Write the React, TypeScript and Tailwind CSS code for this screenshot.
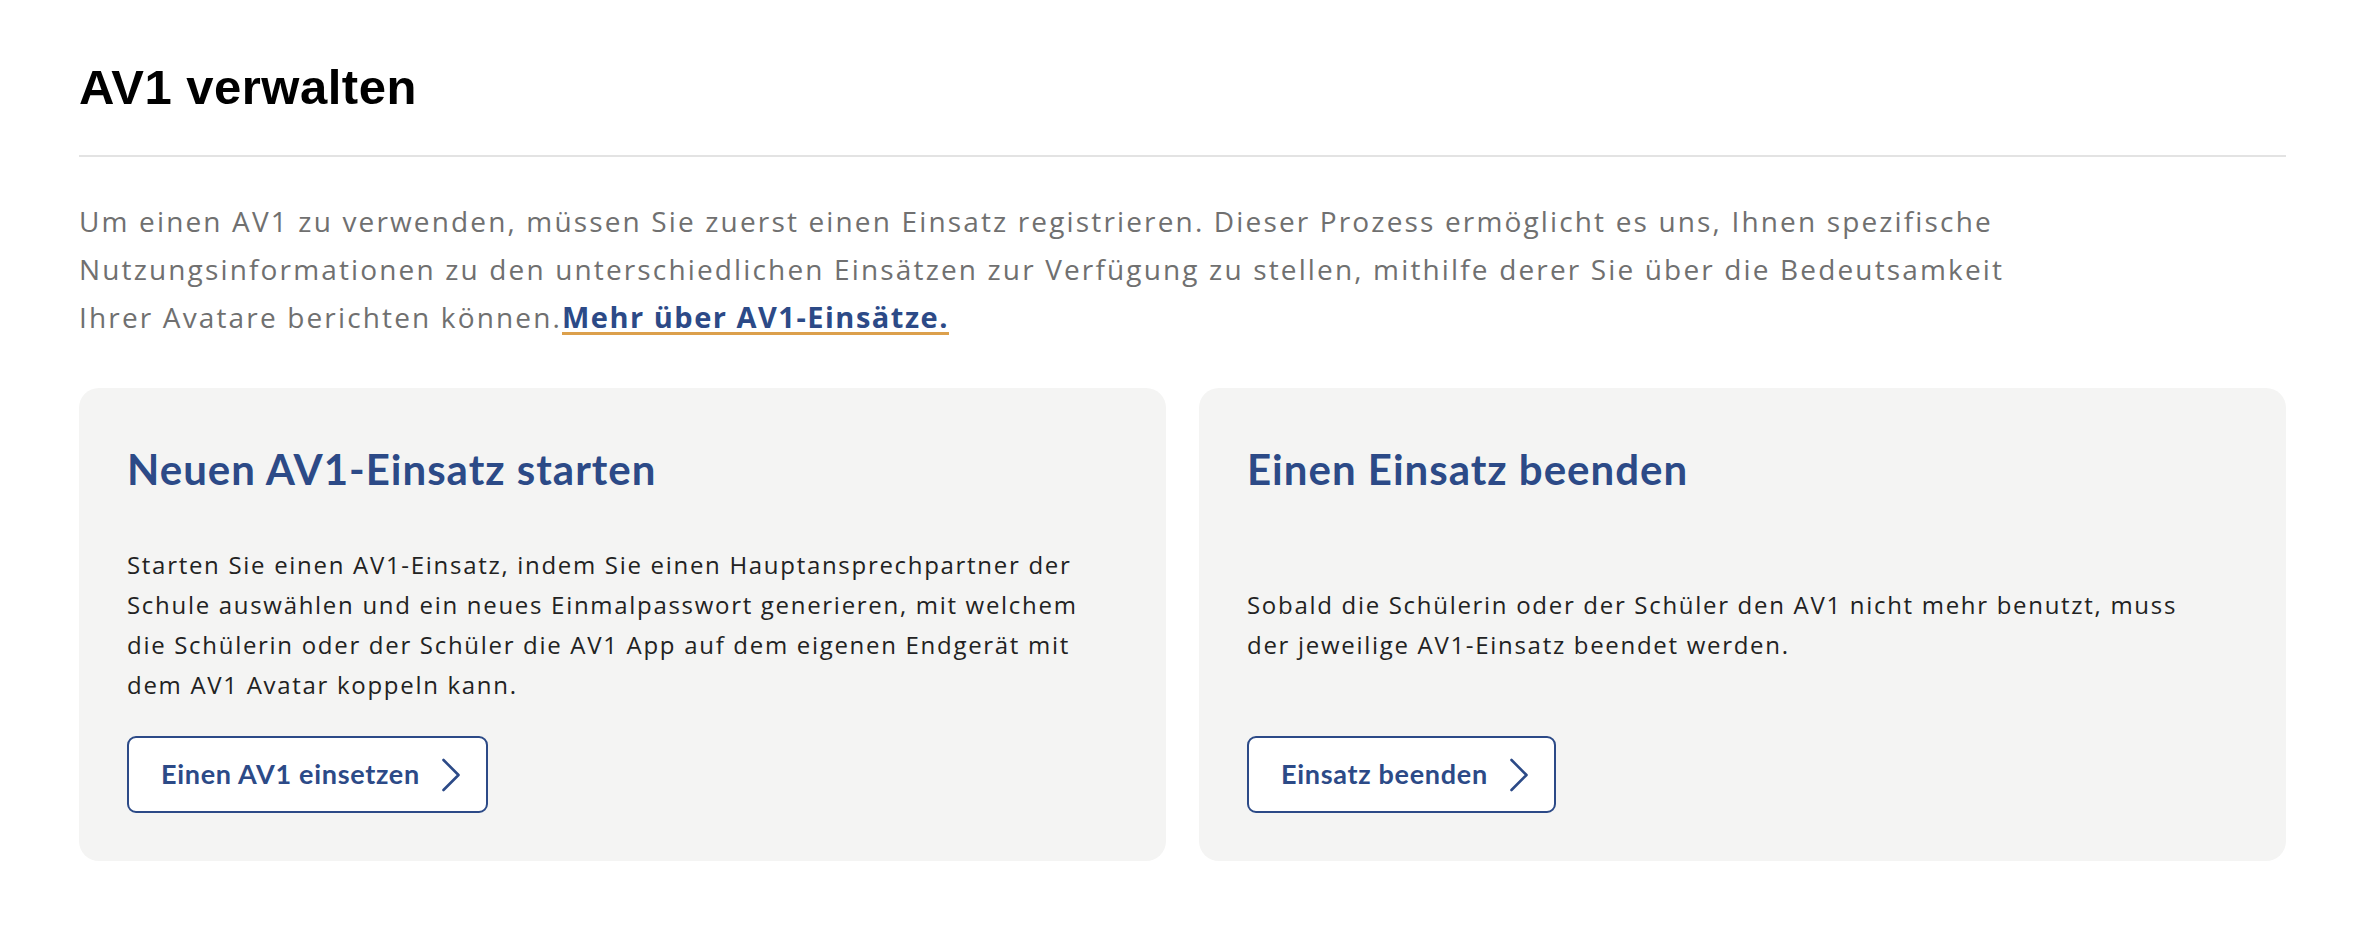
import React from "react";

type Card = {
  title: string;
  lines: string[];
  button: string;
};

const cards: Card[] = [
  {
    title: "Neuen AV1-Einsatz starten",
    lines: [
      "Starten Sie einen AV1-Einsatz, indem Sie einen Hauptansprechpartner der",
      "Schule auswählen und ein neues Einmalpasswort generieren, mit welchem",
      "die Schülerin oder der Schüler die AV1 App auf dem eigenen Endgerät mit",
      "dem AV1 Avatar koppeln kann.",
    ],
    button: "Einen AV1 einsetzen",
  },
  {
    title: "Einen Einsatz beenden",
    lines: [
      "Sobald die Schülerin oder der Schüler den AV1 nicht mehr benutzt, muss",
      "der jeweilige AV1-Einsatz beendet werden.",
    ],
    button: "Einsatz beenden",
  },
];

const Chevron = () => (
  <svg width="20" height="34" viewBox="0 0 20 34" fill="none" className="shrink-0">
    <path d="M2.5 2 L17.5 17 L2.5 32" stroke="#2c4a87" strokeWidth="2.6" strokeLinecap="round" strokeLinejoin="round" />
  </svg>
);

const ActionCard = ({ card }: { card: Card }) => {
  return (
    <div className="flex flex-col rounded-[20px] bg-[#f4f4f3] px-12 pt-[56px] pb-12">
      {/* TITLE */}
      <h2 className="mb-5 font-['Lato',sans-serif] text-[42px] leading-[50px] font-bold tracking-[1px] text-[#2c4a87]">
        {card.title}
      </h2>

      {/* TEXT */}
      <div className="flex flex-1 items-center py-[31px]">
        <p className="text-[24px] leading-[40px] tracking-[1.7px] text-[#222222]">
          {card.lines.map((line, i) => (
            <span key={i} className="block">
              {line}
            </span>
          ))}
        </p>
      </div>

      {/* BUTTON */}
      <div>
        <button className="flex h-[77px] items-center gap-[21px] rounded-[9px] border-2 border-[#2c4a87] bg-white pl-[32px] pr-[25px] font-['Lato',sans-serif] text-[27px] font-bold tracking-[0.7px] text-[#2c4a87]">
          {card.button}
          <Chevron />
        </button>
      </div>
    </div>
  );
};

export default function App() {
  return (
    <div className="min-h-screen bg-white px-[79px] pt-[63px] font-['Open_Sans',sans-serif]">
      <div className="w-[2207px]">
        <h1 className="font-['Liberation_Sans',Arial,sans-serif] text-[49px] leading-none font-bold tracking-[0.5px] text-black">
          AV1 verwalten
        </h1>
        <div className="mt-[43px] h-[2px] bg-[#e3e3e3]" />

        <p className="mt-[40px] max-w-[1975px] text-[28px] leading-[48px] tracking-[2.15px] text-[#707070]">
          Um einen AV1 zu verwenden, müssen Sie zuerst einen Einsatz registrieren. Dieser Prozess ermöglicht es uns, Ihnen spezifische
          Nutzungsinformationen zu den unterschiedlichen Einsätzen zur Verfügung zu stellen, mithilfe derer Sie über die Bedeutsamkeit
          Ihrer Avatare berichten können.
          <a
            href="#"
            className="text-[29px] font-bold tracking-[1.5px] text-[#2c4a87] underline decoration-[#dca04c] decoration-[3px] underline-offset-[4px]"
          >
            Mehr über AV1-Einsätze.
          </a>
        </p>

        <div className="mt-[47px] grid grid-cols-2 gap-[33px]">
          {cards.map((card) => (
            <ActionCard key={card.title} card={card} />
          ))}
        </div>
      </div>
    </div>
  );
}
